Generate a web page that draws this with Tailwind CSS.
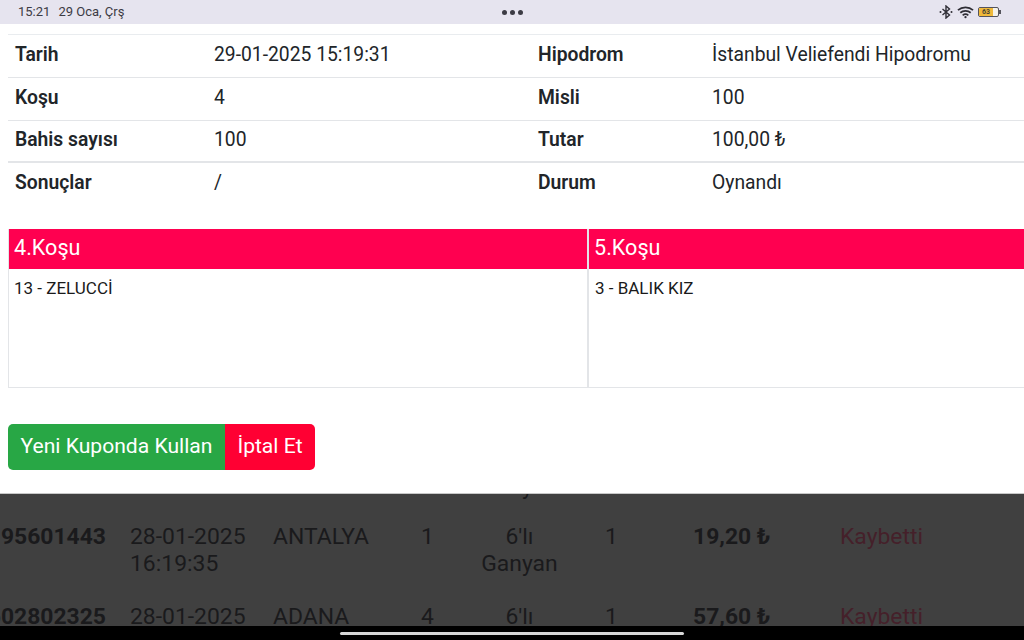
<!DOCTYPE html>
<html lang="tr">
<head>
    <meta charset="UTF-8">
    <meta name="viewport" content="width=device-width, initial-scale=1.0">
    <title>Kupon Detayı</title>
    <script src="https://cdn.jsdelivr.net/npm/@tailwindcss/browser@4"></script>
</head>
<body class="w-[1024px] h-[640px] overflow-hidden flex flex-col bg-black font-['Roboto',sans-serif] text-[#212529]">

    <!-- status bar -->
    <div class="h-[24px] shrink-0 bg-[#e6e4ef] grid grid-cols-[1fr_auto_1fr] items-center px-[18px] text-[13px] text-[#3c3b44]">
        <div class="flex gap-[8px]"><span>15:21</span><span>29 Oca, Çrş</span></div>
        <div class="flex gap-[3px]">
            <span class="w-[5px] h-[5px] rounded-full bg-[#3c3b44]"></span>
            <span class="w-[5px] h-[5px] rounded-full bg-[#3c3b44]"></span>
            <span class="w-[5px] h-[5px] rounded-full bg-[#3c3b44]"></span>
        </div>
        <div class="flex justify-end items-center gap-[4px] mr-[5px]">
            <svg width="14" height="14" viewBox="0 0 14 14" fill="none" stroke="#2f2e36" stroke-width="1.4"><path d="M3.500 4l7 6-3.500 3V1l3.500 3-7 6"/><circle cx="1.500" cy="7" r="1" fill="#2f2e36" stroke="none"/><circle cx="12.500" cy="7" r="1" fill="#2f2e36" stroke="none"/></svg>
            <svg width="17" height="14" viewBox="0 0 18 14" fill="none" stroke="#2f2e36" stroke-width="1.8"><path d="M1 5c4.500-4 11.500-4 16 0M3.500 7.800c3-2.600 8-2.600 11 0M6 10.500c1.700-1.400 4.300-1.400 6 0"/><circle cx="9" cy="12.500" r="1.200" fill="#2f2e36" stroke="none"/></svg>
            <div class="flex items-center">
                <div class="w-[21px] h-[10px] rounded-[2px] border border-[#55545c] bg-[#f4f2ea] overflow-hidden flex">
                    <div class="w-[14px] bg-[#f0b93a] flex items-center justify-center text-[7px] leading-none font-bold text-[#4a4536]">63</div>
                </div>
                <div class="w-[2px] h-[4px] bg-[#55545c]"></div>
            </div>
        </div>
    </div>

    <!-- modal -->
    <div class="h-[470px] shrink-0 bg-white pl-[8px] pt-[10px] border-b border-[#c8c8c8] overflow-hidden">
        <div class="grid grid-cols-[206px_324px_174px_1fr] text-[19.300px] border-t border-[#e9ecef]">
            <div class="h-[43px] flex items-center pl-[7px] pb-[1px] font-semibold border-b border-[#e3e5e8]">Tarih</div>
            <div class="h-[43px] flex items-center pb-[1px] border-b border-[#e3e5e8]">29-01-2025 15:19:31</div>
            <div class="h-[43px] flex items-center pb-[1px] font-semibold border-b border-[#e3e5e8]">Hipodrom</div>
            <div class="h-[43px] flex items-center pb-[1px] border-b border-[#e3e5e8]">İstanbul Veliefendi Hipodromu</div>

            <div class="h-[43px] flex items-center pl-[7px] pb-[1px] font-semibold border-b border-[#e3e5e8]">Koşu</div>
            <div class="h-[43px] flex items-center pb-[1px] border-b border-[#e3e5e8]">4</div>
            <div class="h-[43px] flex items-center pb-[1px] font-semibold border-b border-[#e3e5e8]">Misli</div>
            <div class="h-[43px] flex items-center pb-[1px] border-b border-[#e3e5e8]">100</div>

            <div class="h-[42px] flex items-center pl-[7px] pb-[1px] font-semibold border-b-2 border-[#e3e5e8]">Bahis sayısı</div>
            <div class="h-[42px] flex items-center pb-[1px] border-b-2 border-[#e3e5e8]">100</div>
            <div class="h-[42px] flex items-center pb-[1px] font-semibold border-b-2 border-[#e3e5e8]">Tutar</div>
            <div class="h-[42px] flex items-center pb-[1px] border-b-2 border-[#e3e5e8]">100,00 ₺</div>

            <div class="h-[42px] flex items-center pl-[7px] pb-[2px] font-semibold">Sonuçlar</div>
            <div class="h-[42px] flex items-center pb-[2px]">/</div>
            <div class="h-[42px] flex items-center pb-[2px] font-semibold">Durum</div>
            <div class="h-[42px] flex items-center pb-[2px]">Oynandı</div>
        </div>

        <div class="mt-[24px] grid grid-cols-[581px_1fr] border-b border-[#e3e5e8]">
            <div class="border-l border-r-2 border-[#e3e5e8]">
                <div class="h-[40px] bg-[#ff0050] text-white text-[21.600px] pl-[5px] pb-[2px] flex items-center">4.Koşu</div>
                <div class="h-[118px] pl-[5px] pt-[10px] text-[17px] leading-[18px] text-[#1a1a1a]">13 - ZELUCCİ</div>
            </div>
            <div>
                <div class="h-[40px] bg-[#ff0050] text-white text-[21.600px] pl-[5px] pb-[2px] flex items-center">5.Koşu</div>
                <div class="h-[118px] pl-[6px] pt-[10px] text-[17px] leading-[18px] text-[#1a1a1a]">3 - BALIK KIZ</div>
            </div>
        </div>

        <div class="mt-[36px] flex text-[21.100px] text-white">
            <button class="h-[46px] w-[217px] bg-[#28a745] rounded-l-[5px] pb-[2px]">Yeni Kuponda Kullan</button>
            <button class="h-[46px] w-[90px] bg-[#ff0033] rounded-r-[5px] pb-[2px]">İptal Et</button>
        </div>
    </div>

    <!-- dimmed page behind the modal -->
    <div class="h-[132px] shrink-0 bg-[#404040] overflow-hidden text-[22.900px] leading-[27px] text-[#1a1a1c]">
        <div class="grid grid-cols-[130px_143px_130px_65px_137px_88px_147px_1fr] mt-[-21px]">
            <div class="col-start-5 h-[50px] text-center w-[103px]">Ganyan</div>
            <div class="col-span-3"></div>

            <div class="h-[80px] flex justify-end pr-[24px] font-bold whitespace-nowrap">195601443</div>
            <div>28-01-2025<br>16:19:35</div>
            <div>ANTALYA</div>
            <div class="pl-[18px]">1</div>
            <div class="text-center w-[103px]">6'lı<br>Ganyan</div>
            <div>1</div>
            <div class="font-bold">19,20 ₺</div>
            <div class="text-[#45202a]">Kaybetti</div>

            <div class="flex justify-end pr-[24px] font-bold whitespace-nowrap">602802325</div>
            <div>28-01-2025</div>
            <div>ADANA</div>
            <div class="pl-[18px]">4</div>
            <div class="text-center w-[103px]">6'lı</div>
            <div>1</div>
            <div class="font-bold">57,60 ₺</div>
            <div class="text-[#45202a]">Kaybetti</div>
        </div>
    </div>

    <!-- navigation bar -->
    <div class="h-[14px] shrink-0 bg-black flex items-center justify-center">
        <div class="w-[344px] h-[3px] rounded-full bg-[#d8d8d8]"></div>
    </div>

</body>
</html>
